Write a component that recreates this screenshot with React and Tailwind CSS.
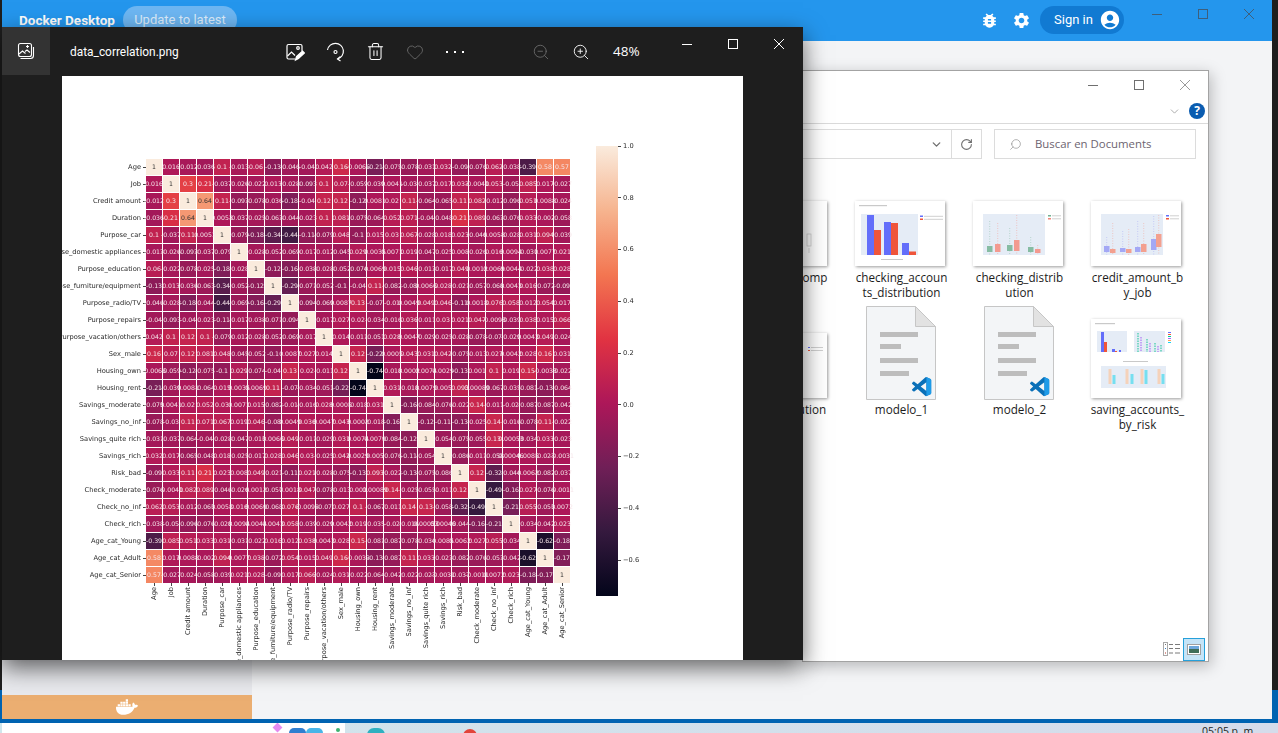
import React from 'react';
import { Trash2, Heart, ZoomIn, ZoomOut, ChevronDown, RotateCw, Search } from 'lucide-react';
import { MdBugReport, MdSettings, MdAccountCircle } from 'react-icons/md';
import { FaDocker } from 'react-icons/fa';

const labels = [
  'Age', 'Job', 'Credit amount', 'Duration', 'Purpose_car', 'Purpose_domestic appliances', 'Purpose_education',
  'Purpose_furniture/equipment', 'Purpose_radio/TV', 'Purpose_repairs', 'Purpose_vacation/others', 'Sex_male',
  'Housing_own', 'Housing_rent', 'Savings_moderate', 'Savings_no_inf', 'Savings_quite rich', 'Savings_rich',
  'Risk_bad', 'Check_moderate', 'Check_no_inf', 'Check_rich', 'Age_cat_Young', 'Age_cat_Adult', 'Age_cat_Senior',
];

// upper triangle of the correlation matrix, each row starts at the diagonal
const upper = [
  [1, 0.016, -0.012, -0.036, 0.1, -0.013, 0.06, -0.13, -0.046, -0.04, 0.042, 0.16, -0.0066, -0.21, -0.075, -0.078, -0.031, 0.032, -0.09, -0.076, 0.062, -0.038, -0.39, 0.58, 0.57],
  [1, 0.3, 0.21, -0.037, -0.026, -0.022, 0.013, -0.028, -0.093, 0.1, 0.07, -0.059, -0.039, 0.0041, -0.03, -0.037, 0.017, 0.033, -0.0041, 0.053, -0.05, 0.085, 0.017, -0.027],
  [1, 0.64, 0.11, -0.093, -0.078, -0.036, -0.18, -0.04, 0.12, 0.12, -0.12, 0.0081, 0.02, 0.11, -0.064, -0.065, 0.11, 0.082, -0.012, -0.096, 0.051, 0.0088, -0.024],
  [1, 0.0053, -0.037, -0.025, -0.063, -0.044, -0.023, 0.1, 0.081, -0.075, -0.064, 0.052, 0.071, -0.04, -0.048, 0.21, 0.089, -0.063, -0.076, 0.033, -0.002, -0.058],
  [1, -0.079, -0.18, -0.34, -0.44, -0.11, -0.079, 0.048, -0.1, 0.015, 0.03, 0.067, -0.028, 0.018, 0.023, -0.046, 0.0058, -0.028, 0.031, 0.094, -0.039],
  [1, -0.028, -0.052, -0.069, -0.017, -0.012, -0.045, 0.029, 0.0035, 0.0071, 0.019, -0.047, -0.025, 0.008, -0.026, 0.016, 0.0094, -0.031, 0.0077, 0.021],
  [1, -0.12, -0.16, -0.038, -0.028, -0.052, -0.074, 0.0069, 0.015, 0.046, -0.013, -0.017, 0.049, 0.0012, 0.0069, 0.0044, -0.022, 0.038, 0.028],
  [1, -0.29, -0.071, -0.052, -0.1, -0.04, 0.11, -0.082, -0.08, 0.0066, 0.028, -0.021, -0.057, -0.068, 0.0043, 0.016, -0.072, -0.09],
  [1, -0.094, -0.069, 0.0087, 0.13, -0.07, -0.01, 0.0049, 0.049, 0.046, -0.11, 0.0018, 0.076, 0.058, 0.012, 0.054, 0.017],
  [1, -0.017, 0.027, 0.02, -0.034, -0.016, 0.036, -0.011, 0.03, 0.021, 0.047, -0.0098, -0.039, 0.038, 0.015, 0.066],
  [1, 0.014, -0.011, -0.051, 0.028, 0.0047, -0.029, -0.025, -0.028, -0.078, -0.07, -0.029, 0.0043, 0.049, -0.024],
  [1, 0.12, -0.22, 0.0005, 0.043, 0.031, 0.042, -0.075, -0.013, 0.027, 0.0042, 0.028, 0.16, 0.031],
  [1, -0.74, -0.018, 0.0002, 0.0074, 0.0029, -0.13, 0.001, 0.1, 0.019, 0.15, -0.0033, -0.022],
  [1, 0.031, -0.018, 0.0079, 0.005, 0.093, 0.00089, -0.067, -0.035, -0.081, -0.13, -0.064],
  [1, -0.16, -0.084, -0.076, -0.022, 0.14, -0.011, -0.02, -0.087, -0.087, -0.042],
  [1, -0.12, -0.11, -0.13, -0.025, 0.14, -0.016, -0.078, 0.11, -0.022],
  [1, -0.054, -0.075, -0.055, 0.13, 0.00053, -0.034, 0.033, -0.023],
  [1, -0.086, -0.011, -0.058, 0.00046, 0.0085, -0.023, -0.0031],
  [1, 0.12, -0.32, -0.044, 0.0062, -0.082, -0.037],
  [1, -0.49, -0.16, 0.027, -0.076, -0.0011],
  [1, -0.21, 0.055, -0.053, 0.0072],
  [1, -0.034, -0.042, 0.023],
  [1, -0.62, -0.18],
  [1, -0.17],
  [1],
];

const valueAt = (r, c) => (r <= c ? upper[r][c - r] : upper[c][r - c]);

const rocket = [
  [0, 3, 5, 26], [0.143, 53, 25, 62], [0.286, 112, 31, 87], [0.429, 173, 23, 89],
  [0.571, 225, 51, 66], [0.714, 243, 118, 81], [0.857, 246, 180, 143], [1, 250, 235, 221],
];

const cellColor = (v) => {
  const t = (v + 0.74) / 1.74;
  for (let i = 1; i < rocket.length; i++) {
    if (t <= rocket[i][0]) {
      const a = rocket[i - 1];
      const b = rocket[i];
      const k = (t - a[0]) / (b[0] - a[0]);
      const mix = (n) => Math.round(a[n] + (b[n] - a[n]) * k);
      return `rgb(${mix(1)},${mix(2)},${mix(3)})`;
    }
  }
  return 'rgb(250,235,221)';
};

const barTicks = ['1.0', '0.8', '0.6', '0.4', '0.2', '0.0', '\u22120.2', '\u22120.4', '\u22120.6'];

const Heatmap = () => (
  <div className="flex items-start font-['DejaVu_Sans',sans-serif] text-[6.700px] text-[#2a2a2a] blur-[0.3px]">
    <div className="mt-[83px] flex flex-col">
      <div className="flex">
        <div className="flex w-[84px] flex-col gap-px">
          {labels.map((l) => (
            <div key={l} className="flex h-4 items-center justify-end gap-[2px] whitespace-nowrap">
              <span>{l}</span>
              <span className="h-px w-[3px] shrink-0 bg-[#444]" />
            </div>
          ))}
        </div>
        <div className="grid w-[424px] grid-cols-[repeat(25,16px)] gap-px bg-white">
          {labels.map((_, r) =>
            labels.map((__, c) => {
              const v = valueAt(r, c);
              return (
                <div key={`${r}-${c}`} className="flex h-4 items-center justify-center" style={{ backgroundColor: cellColor(v) }}>
                  <span className={`relative z-10 whitespace-nowrap text-[6.200px] ${v > 0.6 ? 'text-[#333]' : 'text-[#f6e6ea]'}`}>{v}</span>
                </div>
              );
            })
          )}
        </div>
      </div>
      <div className="ml-[84px] flex w-[424px] gap-px">
        {labels.map((l) => (
          <div key={l} className="flex w-4 flex-col items-center">
            <span className="h-[3px] w-px bg-[#444]" />
            <span className="mt-[1px] rotate-180 whitespace-nowrap [writing-mode:vertical-rl]">{l}</span>
          </div>
        ))}
      </div>
    </div>
    <div className="ml-[26px] mt-[70px] flex">
      <div className="h-[450px] w-[22px] bg-[linear-gradient(to_top,#03051a,#35193e_14.3%,#701f57_28.6%,#ad1759_42.9%,#e13342_57.1%,#f37651_71.4%,#f6b48f_85.7%,#faebdd)]" />
      <div className="flex h-[414px] flex-col justify-between">
        {barTicks.map((t) => (
          <div key={t} className="flex h-0 items-center gap-[2px] whitespace-nowrap">
            <span className="h-px w-[3px] bg-[#444]" />
            <span>{t}</span>
          </div>
        ))}
      </div>
    </div>
  </div>
);

const WinButtons = ({ stroke, closeStroke }) => (
  <div className="flex">
    {['min', 'max', 'close'].map((k) => (
      <div key={k} className="flex w-[46px] items-center justify-center">
        <svg width="12" height="12" viewBox="0 0 12 12" fill="none" stroke={k === 'close' ? closeStroke || stroke : stroke} strokeWidth="1">
          {k === 'min' && <path d="M1 6.5h10" />}
          {k === 'max' && <rect x="1.5" y="1.5" width="9" height="9" />}
          {k === 'close' && <path d="M1 1l10 10M11 1L1 11" />}
        </svg>
      </div>
    ))}
  </div>
);

const PhotosToolbarIcons = () => (
  <div className="flex text-white">
    <div className="flex w-10 items-center justify-center">
      <svg width="20" height="20" viewBox="0 0 20 20" fill="none" stroke="currentColor" strokeWidth="1.2">
        <path d="M10 17H3.5A1.5 1.5 0 0 1 2 15.500V4a1.500 1.500 0 0 1 1.500-1.500h12A1.500 1.500 0 0 1 17 4v5" />
        <path d="M2.500 14l4-4 3.500 3.500" />
        <circle cx="13" cy="6" r="1.300" />
        <path d="M10.500 18l1-3.500 6-5.500 2 2-6 5.500z" fill="currentColor" />
      </svg>
    </div>
    <div className="flex w-10 items-center justify-center">
      <svg width="20" height="20" viewBox="0 0 20 20" fill="none" stroke="currentColor" strokeWidth="1.2">
        <path d="M2.500 8a8 8 0 1 1 10 9" />
        <path d="M15.500 14.500L12.500 17l3 2" />
        <circle cx="10.500" cy="10" r="1.500" />
      </svg>
    </div>
    <div className="flex w-10 items-center justify-center">
      <Trash2 size={19} strokeWidth={1.3} />
    </div>
    <div className="flex w-10 items-center justify-center text-[#6a6a6a]">
      <Heart size={18} strokeWidth={1.2} />
    </div>
    <div className="flex w-10 items-center justify-center gap-[6px]">
      <span className="size-[2px] bg-white" />
      <span className="size-[2px] bg-white" />
      <span className="size-[2px] bg-white" />
    </div>
  </div>
);

const PhotosWindow = () => (
  <div className="absolute left-[2px] top-[27px] flex h-[633px] w-[801px] flex-col bg-[#1e1e1e] shadow-[0_8px_22px_rgba(0,0,0,0.6)]">
    <div className="flex h-[49px] shrink-0 items-center font-['Open_Sans',sans-serif] text-white">
      <div className="flex size-12 items-center justify-center self-start bg-[#333]">
        <svg width="18" height="18" viewBox="0 0 18 18" fill="none" stroke="currentColor" strokeWidth="1.1">
          <rect x="1.500" y="1.500" width="13" height="13" rx="2" />
          <path d="M3.500 16.500h10a3 3 0 0 0 3-3V5" />
          <path d="M2 12l3.500-3 3 2.500M8 9.500l2-1.500 3 2.500" />
          <path d="M10.500 3v3M9 4.500h3" />
        </svg>
      </div>
      <div className="w-[225px] pl-[20px] pt-[2px] font-['Roboto',sans-serif] text-[11.900px]">data_correlation.png</div>
      <PhotosToolbarIcons />
      <div className="w-[46px]" />
      <div className="flex w-10 justify-center text-[#6a6a6a]">
        <ZoomOut size={18} strokeWidth={1.2} />
      </div>
      <div className="flex w-10 justify-center">
        <ZoomIn size={18} strokeWidth={1.2} />
      </div>
      <div className="w-[63px] pl-[12px] text-[13.500px]">48%</div>
      <div className="flex h-[34px] self-start">
        <WinButtons stroke="#ffffff" />
      </div>
    </div>
    <div className="ml-[60px] h-[584px] w-[681px] overflow-hidden bg-white">
      <Heatmap />
    </div>
  </div>
);

const Thumb = ({ h = 65, children }) => (
  <div className="w-[90px] bg-white shadow-[1px_1px_3px_rgba(0,0,0,0.4)]" style={{ height: h }}>
    {children}
  </div>
);

// one box and its whisker: [whisker top, box top, box bottom]
const Box = ({ x, v, color }) => (
  <g>
    <path d={`M${x + 2.700} ${v[0]}V54`} stroke={color} strokeWidth="0.7" strokeDasharray="1 1.500" opacity="0.7" />
    <rect x={x} y={v[1]} width="5.500" height={v[2] - v[1]} fill={color} />
  </g>
);

const BarsThumb = () => (
  <Thumb>
    <svg width="90" height="65" viewBox="0 0 90 65">
      <rect x="4" y="4" width="28" height="1.200" fill="#c9c9c9" />
      <rect x="6" y="13" width="57" height="41" fill="#e5ecf6" />
      <path d="M12 14h7v40h-7zM29 21h7v33h-7zM47 42h7v12h-7z" fill="#636efa" />
      <path d="M19 29h7v25h-7zM36 22h7v32h-7zM54 50.500h7V54h-7z" fill="#ef553b" />
      <rect x="65" y="14.500" width="3" height="1.500" fill="#636efa" />
      <rect x="69" y="14.800" width="19" height="1" fill="#d0d0d0" />
      <rect x="65" y="17.500" width="3" height="1.500" fill="#ef553b" />
      <rect x="69" y="17.800" width="19" height="1" fill="#d0d0d0" />
      <rect x="26" y="58" width="22" height="1" fill="#c9c9c9" />
    </svg>
  </Thumb>
);

const CheckingThumb = () => (
  <Thumb>
    <svg width="90" height="65" viewBox="0 0 90 65">
      <rect x="10" y="13" width="62" height="41" fill="#e5ecf6" />
      <Box x={14} v={[20, 45, 51]} color="#86bca3" />
      <Box x={22} v={[22, 43, 51]} color="#f39a90" />
      <Box x={34} v={[27, 44, 50]} color="#86bca3" />
      <Box x={41} v={[14, 39, 50]} color="#f39a90" />
      <Box x={55} v={[36, 46, 51]} color="#86bca3" />
      <Box x={62} v={[44, 48, 52]} color="#f39a90" />
      <rect x="75" y="14" width="3" height="1.500" fill="#72b293" />
      <rect x="79" y="14.300" width="9" height="1" fill="#d0d0d0" />
      <rect x="75" y="17" width="3" height="1.500" fill="#f0847a" />
      <rect x="79" y="17.300" width="9" height="1" fill="#d0d0d0" />
    </svg>
  </Thumb>
);

const JobThumb = () => (
  <Thumb>
    <svg width="90" height="65" viewBox="0 0 90 65">
      <rect x="10" y="13" width="62" height="41" fill="#e5ecf6" />
      <Box x={13} v={[36, 45, 51]} color="#a3a8f5" />
      <Box x={19} v={[22, 48, 52]} color="#f3a08f" />
      <Box x={29} v={[30, 47, 51]} color="#a3a8f5" />
      <Box x={35} v={[28, 48, 52]} color="#f3a08f" />
      <Box x={44} v={[20, 46, 51]} color="#a3a8f5" />
      <Box x={50} v={[22, 43, 51]} color="#f3a08f" />
      <Box x={60} v={[15, 38, 49]} color="#a3a8f5" />
      <Box x={65} v={[14, 33, 46]} color="#f3a08f" />
      <rect x="75" y="14" width="3" height="1.500" fill="#636efa" />
      <rect x="79" y="14.300" width="9" height="1" fill="#d0d0d0" />
      <rect x="75" y="17" width="3" height="1.500" fill="#ef553b" />
      <rect x="79" y="17.300" width="9" height="1" fill="#d0d0d0" />
    </svg>
  </Thumb>
);

const SavingThumb = () => (
  <Thumb h={79}>
    <svg width="90" height="79" viewBox="0 0 90 79">
      <rect x="4" y="4" width="20" height="1.200" fill="#c9c9c9" />
      <rect x="6" y="12" width="30" height="21" fill="#e5ecf6" />
      <path d="M10 13h3v20h-3zM21 30h3v3h-3zM28 31h2v2h-2z" fill="#636efa" />
      <path d="M13 23h3v10h-3zM24 32h2v1h-2z" fill="#ef553b" />
      <rect x="43" y="12" width="31" height="21" fill="#e5ecf6" />
      <path d="M47 14v19M56 20v13M64 24v9M70 26v7" stroke="#7dd8c5" strokeWidth="2" strokeDasharray="1.500 1" />
      <path d="M50 18v15M59 24v9M67 27v6" stroke="#c4a5f5" strokeWidth="2" strokeDasharray="1.500 1" />
      <rect x="77" y="13" width="3" height="1" fill="#636efa" />
      <rect x="77" y="15" width="3" height="1" fill="#ef553b" />
      <rect x="77" y="17" width="3" height="1" fill="#00cc96" />
      <rect x="77" y="19" width="3" height="1" fill="#ab63fa" />
      <rect x="77" y="21" width="3" height="1" fill="#ffa15a" />
      <rect x="77" y="23" width="3" height="1" fill="#19d3f3" />
      <rect x="10" y="47" width="65" height="22" fill="#e5ecf6" />
      <path d="M19 50v15M36 50v15M51 50v15M68 50v15" stroke="#f5d2ba" strokeWidth="3" />
      <path d="M23 56v9M41 55v10M55 51v14M72 55v10" stroke="#76dff0" strokeWidth="3" />
      <rect x="32" y="42" width="25" height="1" fill="#c9c9c9" />
    </svg>
  </Thumb>
);

const CompThumb = () => (
  <Thumb>
    <svg width="90" height="65" viewBox="0 0 90 65" fill="none" stroke="#c9c9c9" strokeWidth="0.7">
      <rect x="60" y="18" width="4" height="11" fill="#fff" />
      <path d="M62 12v6M62 29v8" />
      <rect x="70" y="33" width="4" height="12" />
      <path d="M72 47v5" />
    </svg>
  </Thumb>
);

const TionThumb = () => (
  <Thumb>
    <svg width="90" height="65" viewBox="0 0 90 65">
      <rect x="2" y="10" width="60" height="42" fill="#e5ecf6" />
      <rect x="71" y="14" width="2" height="1" fill="#636efa" />
      <rect x="74" y="14" width="12" height="1" fill="#d0d0d0" />
      <rect x="71" y="17" width="2" height="1" fill="#ef553b" />
      <rect x="74" y="17" width="12" height="1" fill="#d0d0d0" />
    </svg>
  </Thumb>
);

const CodeDoc = () => (
  <div className="-mb-[2px] ml-[1px]">
    <svg width="70" height="94" viewBox="0 0 70 94">
      <path d="M.5.500h49l20 20v73H.5z" fill="#f3f5f7" stroke="#c6c6c6" />
      <path d="M49.500.500v20h20z" fill="#e2e2e2" stroke="#c6c6c6" />
      <rect x="14" y="26" width="38" height="5" fill="#bdbdbd" />
      <rect x="14" y="38" width="21" height="5" fill="#bdbdbd" />
      <rect x="14" y="52" width="38" height="5" fill="#bdbdbd" />
      <rect x="14" y="65" width="29" height="5" fill="#bdbdbd" />
      <g transform="translate(46 71) scale(0.8)">
        <path fill="#0a70b8" d="M23.150 2.587L18.210.21a1.494 1.494 0 0 0-1.705.29l-9.460 8.630-4.120-3.128a.999.999 0 0 0-1.276.057L.327 7.261A1 1 0 0 0 .326 8.740L3.899 12 .326 15.260a1 1 0 0 0 .001 1.479L1.650 17.940a.999.999 0 0 0 1.276.057l4.120-3.128 9.460 8.630a1.492 1.492 0 0 0 1.704.29l4.942-2.377A1.500 1.500 0 0 0 24 20.060V3.939a1.500 1.500 0 0 0-.85-1.352zm-5.146 14.861L10.826 12l7.178-5.448v10.896z" />
        <path fill="#1e9be8" d="M18 .1l5.150 2.487A1.500 1.500 0 0 1 24 3.939V20.060a1.500 1.500 0 0 1-.85 1.352L18 23.900z" />
      </g>
    </svg>
  </div>
);

const files = [
  { lines: ['box_plots_comp'], thumb: <CompThumb /> },
  { lines: ['checking_accoun', 'ts_distribution'], thumb: <BarsThumb /> },
  { lines: ['checking_distrib', 'ution'], thumb: <CheckingThumb /> },
  { lines: ['credit_amount_b', 'y_job'], thumb: <JobThumb /> },
  { lines: ['job_distribution'], thumb: <TionThumb /> },
  { lines: ['modelo_1'], thumb: <CodeDoc /> },
  { lines: ['modelo_2'], thumb: <CodeDoc /> },
  { lines: ['saving_accounts_', 'by_risk'], thumb: <SavingThumb /> },
];

const ExplorerWindow = () => (
  <div className="absolute left-[802px] top-[70px] flex h-[592px] w-[407px] flex-col border border-[#a3a3a3] bg-white font-['Open_Sans',sans-serif] shadow-[2px_4px_14px_rgba(0,0,0,0.25)]">
    <div className="flex h-[28px] shrink-0 justify-end">
      <WinButtons stroke="#6f6f6f" closeStroke="#9a9a9a" />
    </div>
    <div className="flex h-[25px] shrink-0 items-center justify-end gap-[8px] border-b border-[#dadada] pr-[3px]">
      <ChevronDown size={13} className="text-[#9a9a9a]" strokeWidth={1.5} />
      <div className="flex size-4 items-center justify-center rounded-full bg-[#0a5cb0] text-[12px] font-bold leading-none text-white">?</div>
    </div>
    <div className="flex shrink-0 gap-[12px] pt-[5px] pr-[12px]">
      <div className="flex h-[30px] flex-1 items-center justify-end border border-l-0 border-[#dcdcdc]">
        <ChevronDown size={13} strokeWidth={2.5} className="mr-[8px] text-[#6f6f6f]" />
        <div className="flex h-full w-[30px] items-center justify-center border-l border-[#dcdcdc] text-[#6f6f6f]">
          <RotateCw size={13} strokeWidth={2} />
        </div>
      </div>
      <div className="flex h-[30px] w-[202px] items-center border border-[#dcdcdc] pl-[14px] text-[11.400px] text-[#6d6470]">
        <Search size={13} strokeWidth={1.2} className="-scale-x-100 text-[#8a8a8a]" />
        <span className="ml-[13px]">Buscar en Documents</span>
      </div>
    </div>
    <div className="-ml-[80px] grid grid-cols-[repeat(4,118px)] pt-[7px] text-[11.700px] leading-[15px] text-[#1c1c1c]">
      {files.map((f, i) => (
        <div key={i} className="flex h-[132px] flex-col items-center">
          <div className="flex h-[100px] shrink-0 items-end">{f.thumb}</div>
          <div className="ml-[3px] mt-[4px] whitespace-nowrap text-center">
            {f.lines.map((l) => (
              <div key={l}>{l}</div>
            ))}
          </div>
        </div>
      ))}
    </div>
    <div className="mt-auto flex items-end justify-end gap-[2px] pr-[3px]">
      <svg width="18" height="14" viewBox="0 0 18 14" className="mb-[5px]" fill="none">
        <rect x=".5" y=".5" width="4" height="13" stroke="#a8a8a8" />
        <rect x="2" y="2" width="1" height="1" fill="#777" />
        <rect x="2" y="6" width="1" height="1" fill="#3d7fc4" />
        <rect x="2" y="10.500" width="1" height="1" fill="#c0392b" />
        <path d="M6 2.500h4M12 2.500h5M6 6.500h4M12 6.500h5M6 11h4M12 11h5" stroke="#7a7a7a" />
      </svg>
      <div className="flex h-[23px] w-[22px] items-center justify-center border border-[#26a0da] bg-[#c5e4f7]">
        <svg width="14" height="11" viewBox="0 0 14 11">
          <rect x=".5" y=".5" width="13" height="10" fill="#fff" stroke="#a0a0a0" />
          <rect x="2" y="2" width="10" height="3" fill="#6ea8dc" />
          <rect x="2" y="5" width="10" height="4" fill="#3f6d58" />
        </svg>
      </div>
    </div>
  </div>
);

const DockerWindow = () => (
  <div className="absolute left-[2px] top-0 flex h-[719px] w-[1270px] flex-col font-['Roboto',sans-serif]">
    <div className="flex h-[41px] shrink-0 items-start bg-[#2496ed] pt-[6px] text-white">
      <div className="ml-[17px] flex h-[28px] w-[104px] items-center whitespace-nowrap text-[13.500px] font-bold">Docker Desktop</div>
      <div className="flex h-[28px] w-[114px] items-center justify-center rounded-full bg-[#6db6f2] text-[13px] text-[#dcedfc]">Update to latest</div>
      <div className="ml-auto flex h-[28px] items-center">
        <MdBugReport size={19} />
        <MdSettings size={19} className="ml-[13px]" />
        <div className="ml-[9px] flex h-[28px] w-[84px] items-center gap-[6px] whitespace-nowrap rounded-full bg-[#117ad2] pl-[14px] text-[13px]">
          Sign in
          <MdAccountCircle size={22} className="shrink-0" />
        </div>
      </div>
      <div className="ml-[10px] -mt-[6px] flex h-[28px] w-[138px]">
        <WinButtons stroke="#3e5f7c" />
      </div>
    </div>
    <div className="flex flex-1 bg-[#f3f4f6]">
      <div className="flex w-[250px] flex-col bg-[#e8e9ed]">
        <div className="flex-1" />
        <div className="flex h-[24px] items-center justify-center bg-[#ebae71] text-white">
          <FaDocker size={22} />
        </div>
      </div>
    </div>
  </div>
);

const Taskbar = () => (
  <div className="absolute bottom-0 left-0 flex h-[10px] w-full overflow-hidden bg-gradient-to-r from-[#d0e6ec] to-[#d5dceb]">
    <div className="relative ml-[2px] h-full w-[343px] bg-white">
      <span className="absolute left-[272px] top-[1px] size-[7px] rotate-45 bg-[#e58bf0]" />
      <span className="absolute left-[287px] top-[5px] h-[10px] w-[17px] rounded-full bg-[#2f7fd0]" />
      <span className="absolute left-[304px] top-[5px] h-[10px] w-[17px] rounded-full bg-[#48b5e8]" />
      <span className="absolute left-[334px] top-[5px] size-[4px] rounded-full bg-[#3cb371]" />
    </div>
    <span className="ml-[22px] mt-[5px] h-[14px] w-[18px] rounded-full bg-[#2fb0c0]" />
    <span className="ml-[78px] mt-[6px] h-[14px] w-[14px] rounded-full bg-[#e2443a]" />
    <div className="ml-auto mr-[22px] pt-[3px] font-['Open_Sans',sans-serif] text-[10.500px] leading-none text-[#1c1c1c]">05:05 p. m.</div>
  </div>
);

export default function App() {
  return (
    <div className="relative h-[733px] w-[1278px] overflow-hidden bg-[#1e1e1e]">
      <div className="absolute bottom-[10px] left-0 h-[33px] w-full bg-[#0063b1]" />
      <DockerWindow />
      <Taskbar />
      <ExplorerWindow />
      <PhotosWindow />
    </div>
  );
}
